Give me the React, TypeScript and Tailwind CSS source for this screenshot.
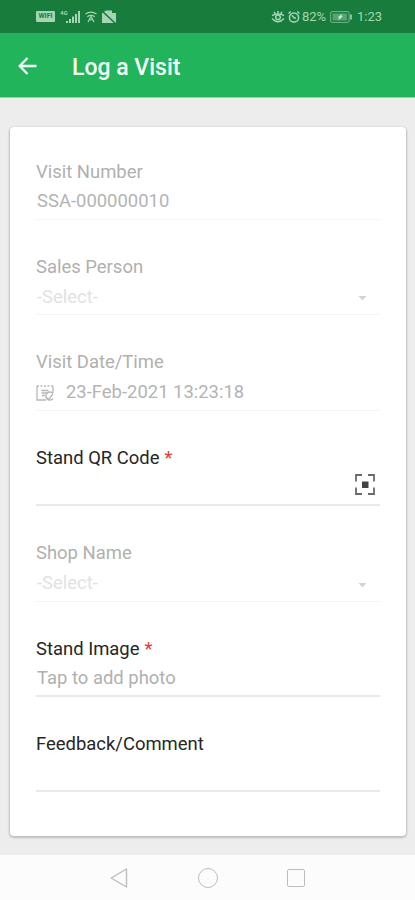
import type { ReactNode } from 'react';

type FieldProps = {
  label: string;
  required?: boolean;
  disabled?: boolean;
  children?: ReactNode;
};

function Field({ label, required, disabled, children }: FieldProps) {
  return (
    <div className="h-[95.4px]">
      <label className={`flex h-[26px] items-center pt-[3px] text-[18.45px] ${disabled ? 'text-[#b0b0b0]' : 'text-[#262626]'}`}>
        {label}
        {required && <span className="ml-[5px] text-[#e53935]">*</span>}
      </label>
      <div
        className={`flex h-9 items-center text-[18.45px] ${
          disabled ? 'border-b border-[#f5f5f5] pt-px' : 'border-b-2 border-[#e9e9e9] pt-[2px]'
        }`}
      >
        {children}
      </div>
    </div>
  );
}

function SelectValue() {
  return (
    <div className="flex flex-1 items-center justify-between pl-px pr-[13px] text-[#e2e2e2]">
      <span>-Select-</span>
      <svg width="9" height="5" viewBox="0 0 9 5" className="mt-[3px]">
        <path d="M0.5 0h8l-4 4.5z" fill="#d4d4d4" />
      </svg>
    </div>
  );
}

function CalendarIcon() {
  return (
    <svg width="18" height="18" viewBox="0 0 18 18" fill="none" stroke="#b8b8b8" strokeWidth="1.3">
      <path d="M17 9V2M1 2v14h9" />
      <path d="M1 2h16" strokeDasharray="2 1.5" />
      <path d="M5.5 6.5h7M5.5 9h6M6 11.5h3" />
      <path d="M17 9.5a4 4 0 1 0 0 5" />
      <path d="M10 13l2.5 2.5L17 10" />
    </svg>
  );
}

function ScanIcon() {
  return (
    <svg width="20" height="21" viewBox="0 0 20 21" fill="none" stroke="#6a6a6a" strokeWidth="1.8">
      <path d="M1 7.5V1h6M13 1h6v6.5M19 13.5V20h-6M7 20H1v-6.5" />
      <rect x="7" y="7.5" width="6.5" height="6.5" fill="#424242" stroke="none" />
    </svg>
  );
}

function StatusBar() {
  return (
    <div className="flex h-[33px] items-center justify-between bg-[#187c3d] pl-[36px] pr-[33px] text-[#a5d5b3]">
      <div className="flex items-center">
        <span className="flex h-[11px] w-[19px] items-center justify-center rounded-[1px] bg-[#a5d5b3] text-[7px] font-bold leading-none text-[#187c3d]">
          WIFI
        </span>
        <span className="mb-[7px] ml-[5px] text-[6px] font-bold leading-none">4G</span>
        <svg width="14" height="12" viewBox="0 0 14 12" fill="currentColor" className="-ml-[2px]">
          <path d="M0 10h2v2H0zM3 8h2v4H3zM6 5.5h2V12H6zM9 3h2v9H9zM12 0h2v12h-2z" />
        </svg>
        <svg width="12" height="12" viewBox="0 0 12 12" fill="none" stroke="currentColor" strokeWidth="1.3" className="ml-[5px]">
          <path d="M0.5 3Q6-0.6 11.5 3M2.3 5.7Q6 3 9.7 5.7" />
          <path d="M6 5.5L3 11M6 5.5L9 11M6 8v1.5" />
        </svg>
        <svg width="16" height="14" viewBox="0 0 16 14" className="ml-[4px]">
          <path d="M1 3l4-2.5h6V3h4v10H1z" fill="currentColor" />
          <path d="M0 0l15 14" stroke="#187c3d" strokeWidth="1.5" />
        </svg>
      </div>
      <div className="flex items-center">
        <svg width="14" height="12" viewBox="0 0 14 12" fill="none" stroke="currentColor" strokeWidth="1.5">
          <path d="M1 4.5Q7 1.5 13 4.5M7 0v3M3.2 0.8l1 2.4M10.8 0.8l-1 2.4M1 7.5Q7 14 13 7.5" />
          <circle cx="7" cy="6.3" r="2.3" />
        </svg>
        <svg width="12" height="12" viewBox="0 0 12 12" fill="none" stroke="currentColor" strokeWidth="1.5" className="ml-[3px]">
          <circle cx="6" cy="6.5" r="4.6" />
          <path d="M0.5 2.5l2.3-2M11.5 2.5l-2.3-2M3.8 4.3L6.3 7H8" />
        </svg>
        <span className="ml-[2px] w-[25px] whitespace-nowrap text-[13px] leading-none">82%</span>
        <svg width="23" height="12" viewBox="0 0 23 12" fill="none" className="ml-[3px]">
          <rect x="0.6" y="0.6" width="18.5" height="10.8" rx="1.5" stroke="currentColor" strokeOpacity="0.65" />
          <rect x="2.5" y="2.5" width="14.5" height="7" fill="currentColor" fillOpacity="0.45" />
          <path d="M21 3.5v5" stroke="currentColor" strokeWidth="1.6" />
          <path d="M12.5 2.5L7.5 6.5h2L8 9.5l5-4.2h-2z" fill="#d3efdb" />
        </svg>
        <span className="ml-[4px] text-[13px] leading-none">1:23</span>
      </div>
    </div>
  );
}

export default function App() {
  return (
    <div className="flex h-[900px] w-[415px] flex-col overflow-hidden bg-[#ededed] font-[Roboto,sans-serif]">
      <StatusBar />

      <header className="flex h-[65px] items-center border-b border-[#8fd5aa] bg-[#22b45b] pl-[18px]">
        <svg width="19" height="18" viewBox="0 0 19 18" fill="none" stroke="#f4fff8" strokeWidth="2.3" className="mt-px">
          <path d="M18.5 9H2M9.5 1L1.7 9l7.8 8" />
        </svg>
        <h1 className="ml-[35px] pt-[6px] text-[23px] font-medium text-[#f4fff8]">Log a Visit</h1>
      </header>

      <main className="flex-1 pl-[10px] pr-[9px] pt-[29px]">
        <div className="h-[709px] rounded-[4px] bg-white pl-[26px] pr-[26px] pt-[31px] shadow-[0_1px_2px_1px_rgba(0,0,0,0.2)]">
          <Field label="Visit Number" disabled>
            <span className="pl-px text-[#b4b4b4]">SSA-000000010</span>
          </Field>
          <Field label="Sales Person" disabled>
            <SelectValue />
          </Field>
          <Field label="Visit Date/Time" disabled>
            <CalendarIcon />
            <span className="ml-[12px] text-[#b4b4b4]">23-Feb-2021 13:23:18</span>
          </Field>
          <Field label="Stand QR Code" required>
            <div className="ml-auto pb-[8px] pr-[5px]">
              <ScanIcon />
            </div>
          </Field>
          <Field label="Shop Name" disabled>
            <SelectValue />
          </Field>
          <Field label="Stand Image" required>
            <span className="pl-px text-[#b0b0b0]">Tap to add photo</span>
          </Field>
          <Field label="Feedback/Comment" />
        </div>
      </main>

      <nav className="flex h-[45px] items-center bg-[#fcfcfc] pl-[110px]">
        <svg width="18" height="20" viewBox="0 0 18 20" fill="none" stroke="#bdbdbd" strokeWidth="1.4">
          <path d="M16.5 1v18L1.2 10z" strokeLinejoin="round" />
        </svg>
        <div className="ml-[70px] h-[20px] w-[20px] rounded-full border-[1.5px] border-[#bdbdbd]" />
        <div className="ml-[69px] h-[18px] w-[18px] rounded-[2px] border-[1.5px] border-[#bdbdbd]" />
      </nav>
    </div>
  );
}
